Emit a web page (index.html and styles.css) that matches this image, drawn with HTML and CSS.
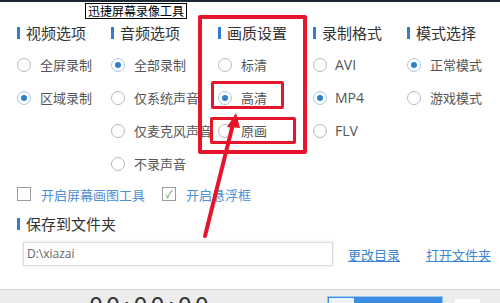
FILE: index.html
```html
<!DOCTYPE html>
<html lang="zh-CN">
<head>
    <meta charset="UTF-8">
    <title>迅捷屏幕录像工具</title>
    <link rel="stylesheet" href="styles.css">
</head>
<body>
    <div class="topline"></div>

    <div class="panel">
        <div class="options">
            <div class="col">
                <h3 class="head">视频选项</h3>
                <label class="opt"><span class="radio"></span>全屏录制</label>
                <label class="opt"><span class="radio on"></span>区域录制</label>
            </div>
            <div class="col">
                <h3 class="head">音频选项</h3>
                <label class="opt"><span class="radio on"></span>全部录制</label>
                <label class="opt"><span class="radio"></span>仅系统声音</label>
                <label class="opt"><span class="radio"></span>仅麦克风声音</label>
                <label class="opt"><span class="radio"></span>不录声音</label>
            </div>
            <div class="col">
                <h3 class="head">画质设置</h3>
                <label class="opt"><span class="radio"></span>标清</label>
                <label class="opt"><span class="radio on"></span>高清</label>
                <label class="opt"><span class="radio"></span>原画</label>
            </div>
            <div class="col">
                <h3 class="head">录制格式</h3>
                <label class="opt latin"><span class="radio"></span>AVI</label>
                <label class="opt latin"><span class="radio on"></span>MP4</label>
                <label class="opt latin"><span class="radio"></span>FLV</label>
            </div>
            <div class="col">
                <h3 class="head">模式选择</h3>
                <label class="opt"><span class="radio on"></span>正常模式</label>
                <label class="opt"><span class="radio"></span>游戏模式</label>
            </div>
        </div>

        <div class="checks">
            <label class="check"><span class="box"></span>开启屏幕画图工具</label>
            <label class="check"><span class="box ticked">&#10003;</span>开启悬浮框</label>
        </div>

        <h3 class="head">保存到文件夹</h3>
        <div class="save-row">
            <div class="path">D:\xiazai</div>
            <a class="link" href="#">更改目录</a>
            <a class="link" href="#">打开文件夹</a>
        </div>
    </div>

    <div class="statusbar">
        <span class="timer">00:00:00</span>
        <span class="rec-btn"><span class="rec-left"></span></span>
        <span class="small-btn"></span>
    </div>

    <!-- annotation overlays -->
    <div class="tag">迅捷屏幕录像工具</div>
    <div class="mark mark-big"></div>
    <div class="mark mark-hd"></div>
    <div class="mark mark-raw"></div>
    <svg class="arrow" width="500" height="303" viewBox="0 0 500 303">
        <line x1="205" y1="236" x2="233" y2="124" stroke="#e5162b" stroke-width="4" stroke-linecap="round"/>
        <polygon points="236,113 227,127 240,128" fill="#e5162b"/>
    </svg>
</body>
</html>
```

FILE: styles.css
```css
/* page */
body {
    margin: 0;
    width: 500px;
    height: 303px;
    overflow: hidden;
    position: relative;
    background-color: #fff;
    font-family: "Noto Sans CJK SC", "Noto Sans", sans-serif;
    color: #555;
}

.topline {
    height: 2px;
    background-color: #1d2633;
}

.panel {
    padding: 21px 0 0 17px;
    height: 266px;
    box-sizing: border-box;
}

.head {
    margin: 0;
    font-size: 15px;
    font-weight: normal;
    line-height: 20px;
    color: #333;
    display: flex;
    align-items: center;
    gap: 6px;
}

.head::before {
    content: "";
    width: 3px;
    height: 12px;
    background-color: #2f7fd1;
}

.options {
    display: grid;
    grid-template-columns: 94px 107px 95px 94px 93px;
}

.col {
    display: flex;
    flex-direction: column;
}

.col .head {
    margin-bottom: 5px;
}

.opt {
    display: flex;
    align-items: center;
    gap: 9px;
    height: 33px;
    font-size: 13px;
    color: #555;
    white-space: nowrap;
}

.opt.latin {
    font-family: "Open Sans", "Noto Sans", sans-serif;
    font-size: 14px;
    gap: 8px;
}

.radio {
    width: 12px;
    height: 12px;
    border: 1px solid #b9b9b9;
    border-radius: 50%;
    flex-shrink: 0;
    position: relative;
    background-color: #fff;
}

.radio.on {
    border-color: #a9c8ea;
}

.radio.on::after {
    content: "";
    position: absolute;
    left: 3px;
    top: 3px;
    width: 6px;
    height: 6px;
    border-radius: 50%;
    background-color: #2f7fd1;
}

.checks {
    display: flex;
    gap: 17px;
    height: 20px;
    margin: 4px 0 10px;
}

.check {
    display: flex;
    align-items: center;
    gap: 10px;
    font-size: 13px;
    color: #4d8fd4;
    white-space: nowrap;
}

.box {
    width: 12px;
    height: 12px;
    border: 1px solid #9a9a9a;
    background-color: #fff;
    font-size: 10px;
    line-height: 12px;
    text-align: center;
    color: #3a9a3a;
}

.save-row {
    display: flex;
    align-items: center;
    margin: 8px 0 0 6px;
}

.path {
    flex-shrink: 0;
    width: 305px;
    height: 22px;
    line-height: 22px;
    border: 1px solid #dcdcdc;
    box-shadow: 0 0 3px rgba(0, 0, 0, 0.12);
    padding-left: 3px;
    font-family: "Open Sans", "Noto Sans", sans-serif;
    font-size: 12px;
    color: #666;
    margin-right: 15px;
}

.link {
    flex-shrink: 0;
    white-space: nowrap;
    font-size: 13px;
    color: #3c84d0;
    text-decoration: underline;
    margin-right: 26px;
}

.statusbar {
    height: 14px;
    border-top: 1px solid #d2d2d2;
    background-color: #ececec;
    position: relative;
    margin-top: 21px;
}

.timer {
    position: absolute;
    left: 89px;
    top: 5px;
    font-family: "DejaVu Sans", sans-serif;
    font-size: 22px;
    letter-spacing: 3px;
    color: #333;
    line-height: 22px;
}

.rec-btn {
    position: absolute;
    left: 327px;
    top: 6px;
    width: 116px;
    height: 20px;
    background-color: #3b8de3;
    border: 1px solid #9cc7f0;
    box-sizing: border-box;
}

.rec-left {
    display: block;
    width: 25px;
    height: 20px;
    margin: 1px 0 0 1px;
    background-color: #eef4fb;
}

.small-btn {
    position: absolute;
    left: 455px;
    top: 9px;
    width: 25px;
    height: 20px;
    background-color: #fff;
}

/* annotations */
.tag {
    position: absolute;
    left: 85px;
    top: 3px;
    padding: 0 2px;
    border: 1px solid #000;
    background-color: #fff;
    font-size: 12px;
    line-height: 14px;
    color: #000;
}

.mark {
    position: absolute;
    border: 4px solid #e5162b;
    border-radius: 2px;
    box-sizing: border-box;
}

.mark-big {
    left: 198px;
    top: 15px;
    width: 109px;
    height: 139px;
}

.mark-hd {
    left: 211px;
    top: 81px;
    width: 73px;
    height: 28px;
    border-width: 3px;
}

.mark-raw {
    left: 210px;
    top: 117px;
    width: 86px;
    height: 27px;
    border-width: 3px;
}

.arrow {
    position: absolute;
    left: 0;
    top: 0;
}
```
